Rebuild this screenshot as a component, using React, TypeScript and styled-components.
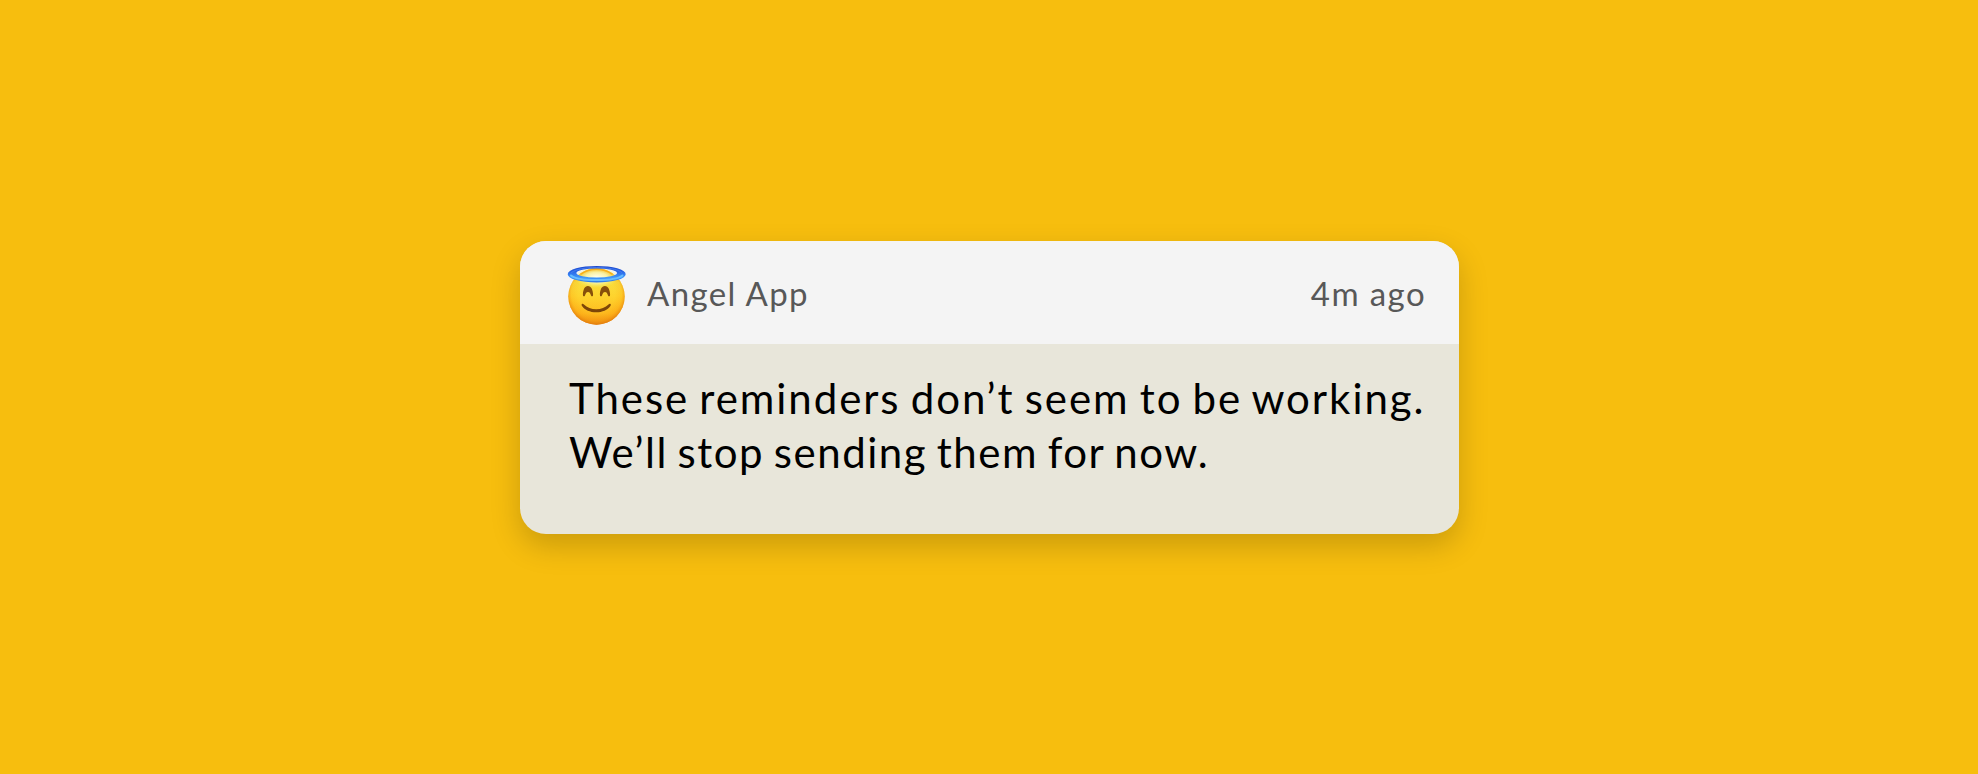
import styled, { createGlobalStyle } from "styled-components"

const message = [
	{ text: "These reminders don’t seem to be working.", spacing: 1.94 },
	{ text: "We’ll stop sending them for now.", spacing: 1.5 },
]

const AngelIcon = () => {
	return (
		<AngelSvg viewBox="0 0 60 61" role="img" aria-label="Angel">
			<defs>
				<linearGradient id="face" x1="0" y1="0" x2="0" y2="1">
					<stop offset="0" stopColor="#f2a413" />
					<stop offset=".25" stopColor="#f8dc3c" />
					<stop offset=".5" stopColor="#fed02a" />
					<stop offset=".8" stopColor="#fdb31a" />
					<stop offset="1" stopColor="#ee8c12" />
				</linearGradient>
				<radialGradient id="shade" cx=".5" cy=".46" r=".54">
					<stop offset=".6" stopColor="#ffdf3a" stopOpacity=".2" />
					<stop offset=".82" stopColor="#fba514" stopOpacity=".2" />
					<stop offset="1" stopColor="#e07a0c" stopOpacity=".95" />
				</radialGradient>
				<radialGradient id="glow" cx=".5" cy=".5" r=".5">
					<stop offset="0" stopColor="#fffff0" />
					<stop offset=".5" stopColor="#f8f6b0" stopOpacity=".9" />
					<stop offset="1" stopColor="#f4ea60" stopOpacity="0" />
				</radialGradient>
				<linearGradient id="halo" x1="0" y1="0" x2="0" y2="1">
					<stop offset="0" stopColor="#1c46cc" />
					<stop offset=".35" stopColor="#2a66e6" />
					<stop offset=".7" stopColor="#3f97fb" />
					<stop offset="1" stopColor="#2f78e4" />
				</linearGradient>
			</defs>
			<circle cx="29.5" cy="31.5" r="28.2" fill="url(#face)" />
			<circle cx="29.5" cy="31.5" r="28.2" fill="url(#shade)" />
			<ellipse cx="29.5" cy="12.5" rx="22" ry="10.5" fill="url(#glow)" />
			<path d="M13.5 9.4C23 2.6 36 2.6 45.5 9.4" fill="none" stroke="#f7b01c" strokeWidth="1.5" />
			<path d="M.7 9.2a29 8.3 0 0 1 58 0a29 8.3 0 0 1-58 0zM9.4 8a20.3 4.5 0 0 0 40.6 0a20.3 4.5 0 0 0-40.6 0z" fill="url(#halo)" fillRule="evenodd" />
			<path d="M4 10.5C8 13.8 17 15.1 29.7 15.1S51.4 13.8 55.4 10.5" fill="none" stroke="#68bdff" strokeWidth="2" strokeLinecap="round" />
			<path d="M4.5 7.5C9 4 19 2.5 29.7 2.5S50.4 4 54.9 7.5" fill="none" stroke="#4a83f2" strokeWidth=".8" strokeLinecap="round" />
			<path d="M15.9 30C16 25 17.6 21.1 20.9 21.1S26 25 26.1 30C26.1 31.5 24.6 31.8 24 30.4C23.3 28.3 22.4 27.1 21 27.1S18.7 28.3 18 30.4C17.4 31.8 15.9 31.5 15.9 30z" fill="#87500a" />
			<path d="M32.9 30C33 25 34.6 21.1 37.9 21.1S43 25 43.1 30C43.1 31.5 41.6 31.8 41 30.4C40.3 28.3 39.4 27.1 38 27.1S35.7 28.3 35 30.4C34.4 31.8 32.9 31.5 32.9 30z" fill="#87500a" />
			<path d="M14.9 39C14.3 39.5 14.6 40.2 15 40.9C17.8 44.9 23 47.2 29.2 47.2S40.6 44.9 43.4 40.9C43.8 40.2 44.1 39.5 43.5 39C42.9 38.4 42.1 38.9 41.5 39.4C38.4 42.5 34 44.2 29.2 44.2S20 42.5 16.9 39.4C16.3 38.9 15.5 38.4 14.9 39z" fill="#7d4608" />
		</AngelSvg>
	)
}

const App = () => {
	return (
		<>
			<GlobalStyle />
			<Page>
				<Notification>
					<Header>
						<AngelIcon />
						<AppName>Angel App</AppName>
						<Time>4m ago</Time>
					</Header>
					<Message>
						{message.map((line) => <Line key={line.text} $spacing={line.spacing}>{line.text}</Line>)}
					</Message>
				</Notification>
			</Page>
		</>
	)
}

const GlobalStyle = createGlobalStyle`
	* {
		box-sizing: border-box;
	}

	body {
		margin: 0;
		background-color: #f7be0e;
		font-family: Lato, "Open Sans", sans-serif;
	}
`

const Page = styled.main`
	display: flex;
	align-items: center;
	justify-content: center;
	height: 100vh;
	padding: 1px 0 0 1px;
	background-color: #f7be0e;
`

const Notification = styled.article`
	width: 939px;
	height: 293px;
	border-radius: 26px;
	overflow: hidden;
	background-color: #e8e6da;
	box-shadow: 0 12px 30px rgba(0, 0, 0, .18);
`

const Header = styled.header`
	display: flex;
	align-items: center;
	height: 103px;
	padding: 1px 33px 0 47px;
	background-color: #f4f4f4;
	color: #585858;
	font-size: 33px;
	line-height: 40px;
`

const AngelSvg = styled.svg`
	width: 60px;
	height: 61px;
	flex: none;
	margin-top: 5px;
`

const AppName = styled.span`
	margin-left: 20px;
	letter-spacing: 1.4px;
`

const Time = styled.time`
	margin-left: auto;
	letter-spacing: 1.4px;
`

const Message = styled.div`
	padding: 27px 0 0 49px;
	color: #000;
	font-size: 42px;
	line-height: 54px;
	word-spacing: -2.5px;
	white-space: nowrap;
`

const Line = styled.p<{ $spacing: number }>`
	margin: 0;
	letter-spacing: ${({ $spacing }) => $spacing}px;
`

export default App
